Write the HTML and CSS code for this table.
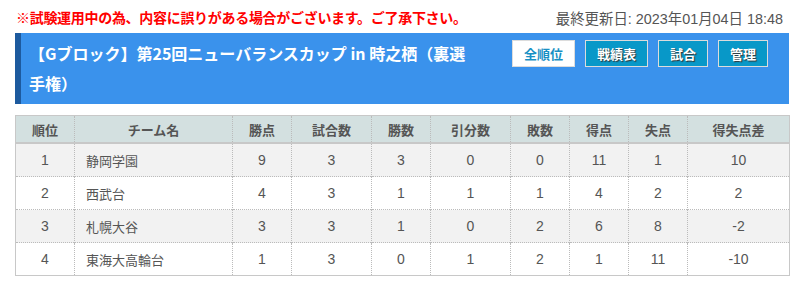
FILE: index.html
```html
<!DOCTYPE html>
<html lang="ja">
<head>
<meta charset="utf-8">
<link rel="stylesheet" href="styles.css">
</head>
<body>
<div class="page">
  <div class="topbar">
    <div class="notice">※試験運用中の為、内容に誤りがある場合がございます。ご了承下さい。</div>
    <div class="updated">最終更新日: 2023年01月04日 18:48</div>
  </div>
  <div class="band">
    <h1 class="title">【Gブロック】第25回ニューバランスカップ in 時之栖（裏選手権）</h1>
    <div class="btns">
      <a class="btn active">全順位</a>
      <a class="btn">戦績表</a>
      <a class="btn">試合</a>
      <a class="btn">管理</a>
    </div>
  </div>
  <table class="standings">
    <colgroup>
      <col class="c59"><col class="c158"><col class="c59"><col class="c80"><col class="c59"><col class="c80"><col class="c59"><col class="c59"><col class="c59"><col class="c102">
    </colgroup>
    <thead>
      <tr><th>順位</th><th>チーム名</th><th>勝点</th><th>試合数</th><th>勝数</th><th>引分数</th><th>敗数</th><th>得点</th><th>失点</th><th>得失点差</th></tr>
    </thead>
    <tbody>
      <tr><td>1</td><td class="name">静岡学園</td><td>9</td><td>3</td><td>3</td><td>0</td><td>0</td><td>11</td><td>1</td><td>10</td></tr>
      <tr><td>2</td><td class="name">西武台</td><td>4</td><td>3</td><td>1</td><td>1</td><td>1</td><td>4</td><td>2</td><td>2</td></tr>
      <tr><td>3</td><td class="name">札幌大谷</td><td>3</td><td>3</td><td>1</td><td>0</td><td>2</td><td>6</td><td>8</td><td>-2</td></tr>
      <tr><td>4</td><td class="name">東海大高輪台</td><td>1</td><td>3</td><td>0</td><td>1</td><td>2</td><td>1</td><td>11</td><td>-10</td></tr>
    </tbody>
  </table>
</div>
</body>
</html>
```
FILE: styles.css
```css
html, body {
  margin: 0;
  padding: 0;
  background: #fff;
}
body {
  font-family: "Liberation Sans", "Noto Sans CJK JP", sans-serif;
  color: #555;
}
.page {
  padding: 0 16px 0 15px;
}
.topbar {
  display: flex;
  justify-content: space-between;
  align-items: center;
  height: 20px;
  padding-top: 7px;
}
.notice {
  color: #ff0000;
  font-weight: bold;
  font-size: 14px;
  letter-spacing: -0.3px;
  padding-left: 1px;
  font-family: "Noto Sans CJK JP", sans-serif;
}
.updated {
  font-size: 14.4px;
  color: #555;
  padding-right: 6px;
}
.band {
  margin-top: 6px;
  background: #3a92ec;
  border-left: 6px solid #1d5a9e;
  display: flex;
  align-items: flex-start;
  gap: 40px;
  padding: 5px 21px 6px 8px;
}
.title {
  flex: 1;
  margin: 0;
  color: #fff;
  font-size: 16px;
  font-weight: bold;
  line-height: 30px;
  font-family: "Noto Sans CJK JP", sans-serif;
}
.btns {
  display: flex;
  gap: 10px;
  margin-top: 2px;
}
.btn {
  display: block;
  height: 25px;
  line-height: 25px;
  padding: 0 11px;
  border: 1px solid #dcdcdc;
  background: #0898c8;
  color: #fff;
  font-size: 13px;
  font-weight: bold;
  text-shadow: 1px 1px 1px #333;
  font-family: "Noto Sans CJK JP", sans-serif;
}
.btn.active {
  background: #fff;
  color: #1890c4;
  text-shadow: none;
}
.standings {
  margin-top: 11px;
  width: 774px;
  border-collapse: collapse;
  table-layout: fixed;
  border: 1px solid #c8c8c8;
  font-size: 14px;
}
.c59 { width: 59px; }
.c80 { width: 80px; }
.c102 { width: 102px; }
.c158 { width: 158px; }
.standings th {
  background: #d3e0e0;
  height: 26px;
  font-size: 13px;
  font-weight: bold;
  color: #555;
  border-bottom: 2px solid #c8c8c8;
  border-left: 1px dotted #bbb;
  font-family: "Noto Sans CJK JP", sans-serif;
  padding: 0;
}
.standings td {
  height: 32px;
  text-align: center;
  border-left: 1px dotted #bbb;
  border-top: 1px dotted #bbb;
  padding: 0;
  color: #555;
}
.standings td.name {
  text-align: left;
  padding-left: 11px;
  font-size: 13px;
  font-family: "Noto Sans CJK JP", sans-serif;
}
.standings tbody tr:nth-child(odd) td {
  background: #f2f2f2;
}
.standings tbody tr:first-child td {
  border-top: none;
}
```
